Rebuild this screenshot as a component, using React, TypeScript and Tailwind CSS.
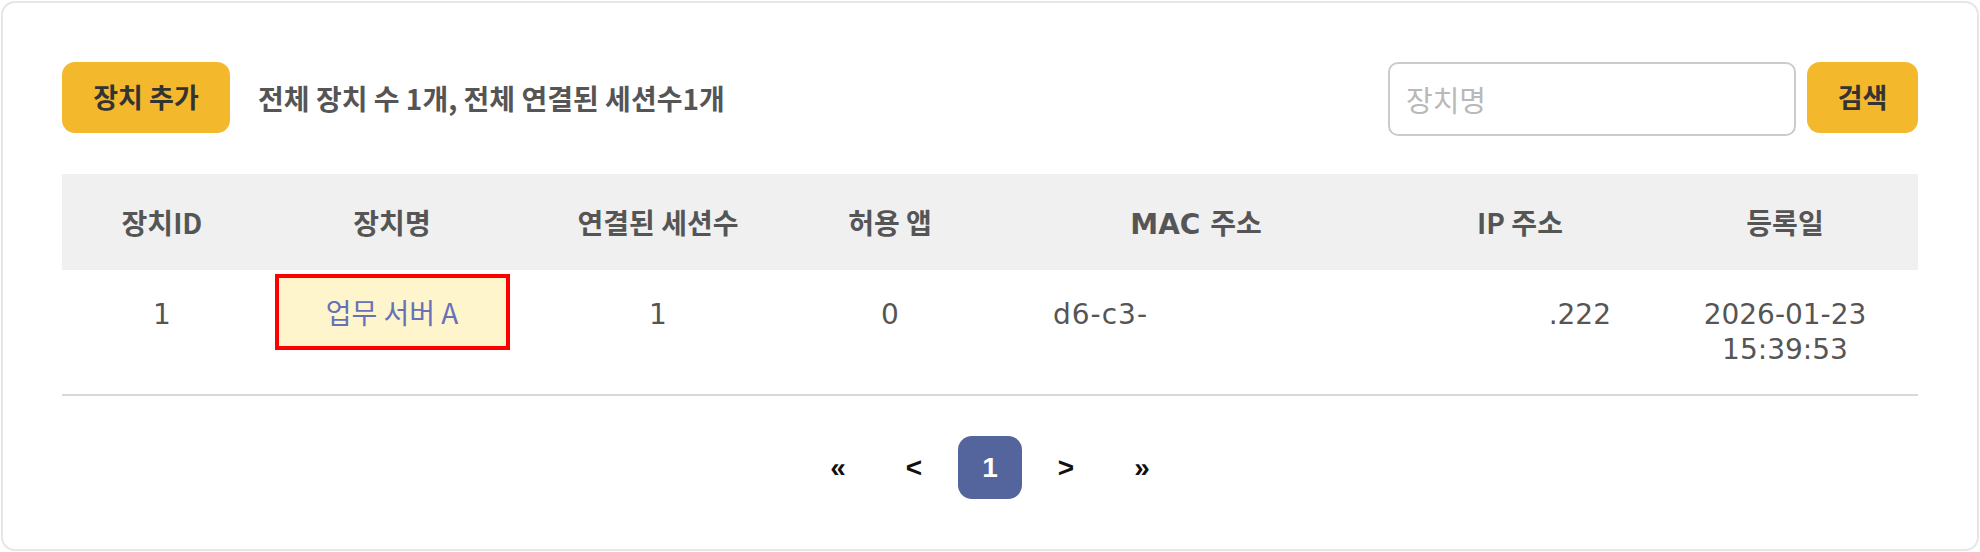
import React from "react";

const KO = "font-['Noto_Sans_CJK_KR',sans-serif]";
const LAT = "font-['DejaVu_Sans','Noto_Sans_CJK_KR',sans-serif]";
const COLS = "grid grid-cols-[200px_260px_272px_192px_420px_228px_284px]";

const headers = ["장치ID", "장치명", "연결된 세션수", "허용 앱", "MAC 주소", "IP 주소", "등록일"];

const App = () => {
  return (
    <div className="w-[1980px] h-[552px] bg-white p-px">
      <div className="h-[550px] rounded-[14px] border-2 border-[#e6e6e6] px-[59px] pt-[59px]">
        {/* top bar */}
        <div className="flex items-start justify-between">
          <div className="flex items-center">
            <button
              type="button"
              className={`${KO} w-[168px] h-[71px] rounded-[13px] bg-[#f4b82c] text-[27px] font-bold text-[#333]`}
            >
              장치 추가
            </button>
            <p className={`${KO} ml-[28px] text-[28px] font-bold text-[#555]`}>
              전체 장치 수 1개, 전체 연결된 세션수1개
            </p>
          </div>
          <div className="flex items-start gap-[11px]">
            <input
              type="text"
              placeholder="장치명"
              className={`${KO} w-[408px] h-[74px] rounded-[10px] border-2 border-[#cbcbcb] pl-[16px] text-[29px] text-[#333] placeholder:text-[#b9b9b9] outline-none`}
            />
            <button
              type="button"
              className={`${KO} w-[111px] h-[71px] rounded-[13px] bg-[#f4b82c] text-[27px] font-bold text-[#333]`}
            >
              검색
            </button>
          </div>
        </div>

        {/* table */}
        <div className={`${COLS} mt-[38px] h-[96px] items-center bg-[#f0f0f0]`}>
          {headers.map((h, i) => (
            <div
              key={h}
              className={`${i === 4 ? `${LAT} pt-[5px]` : KO} text-center text-[28px] font-bold text-[#555] ${i === 6 ? "pl-[18px]" : ""}`}
            >
              {h}
            </div>
          ))}
        </div>
        <div className={`${COLS} ${LAT} border-b-2 border-[#d9d9d9] text-[28px] leading-[35px] text-[#555]`}>
          <div className="py-[27px] text-center">1</div>
          <div className="py-[27px]">
            <div
              className={`${KO} -mt-[23px] mx-auto w-[235px] h-[76px] border-4 border-[#ff0000] bg-[#fff5cc] flex items-center justify-center text-[28px] text-[#6771b7]`}
            >
              업무 서버 A
            </div>
          </div>
          <div className="py-[27px] text-center">1</div>
          <div className="py-[27px] text-center">0</div>
          <div className="py-[27px] pl-[67px] text-left tracking-[1px]">d6-c3-</div>
          <div className="py-[27px] pr-[23px] text-right">.222</div>
          <div className="py-[27px] pl-[18px] text-center">
            2026-01-23
            <br />
            15:39:53
          </div>
        </div>

        {/* pagination */}
        <div className="mt-[40px] flex justify-center gap-[12px] font-['Liberation_Sans',sans-serif] text-[28px] font-bold text-[#111]">
          <span className="w-[64px] h-[63px] flex items-center justify-center">«</span>
          <span className="w-[64px] h-[63px] flex items-center justify-center">&lt;</span>
          <span className="w-[64px] h-[63px] flex items-center justify-center rounded-[14px] bg-[#54649c] text-white">
            1
          </span>
          <span className="w-[64px] h-[63px] flex items-center justify-center">&gt;</span>
          <span className="w-[64px] h-[63px] flex items-center justify-center">»</span>
        </div>
      </div>
    </div>
  );
};

export default App;
